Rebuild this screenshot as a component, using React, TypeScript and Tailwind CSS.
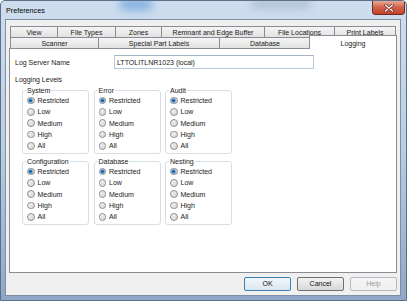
import React from 'react'

// Tab strip rows (back row first), widths measured from the dialog
const TAB_ROW_1 = [
    { label: 'View', w: 'w-[47px]' },
    { label: 'File Types', w: 'w-[58px]' },
    { label: 'Zones', w: 'w-[46px]' },
    { label: 'Remnant and Edge Buffer', w: 'w-[103px]' },
    { label: 'File Locations', w: 'w-[70px]' },
    { label: 'Print Labels', w: 'w-[62px] border-r' },
]

const TAB_ROW_2 = [
    { label: 'Scanner', w: 'w-[88px]' },
    { label: 'Special Part Labels', w: 'w-[121px]' },
    { label: 'Database', w: 'w-[91px]' },
]

const LEVELS = ['Restricted', 'Low', 'Medium', 'High', 'All']

const GROUPS = ['System', 'Error', 'Audit', 'Configuration', 'Database', 'Nesting']

function Radio({ label, checked }: { label: string; checked?: boolean }) {
    return (
        <div className="flex items-center h-[11.3px]">
            <span className="w-[7.5px] h-[7.5px] rounded-full border border-[#8d8d8d] bg-gradient-to-br from-[#f4f4f4] to-[#d6d6d6] flex items-center justify-center">
                {checked && <span className="w-[3px] h-[3px] rounded-full bg-[#1f5f9e] shadow-[0_0_1px_1px_#6fa6d6]" />}
            </span>
            <span className="ml-[3px] leading-none">{label}</span>
        </div>
    )
}

function LevelGroup({ title }: { title: string }) {
    return (
        <fieldset className="border border-[#d5dfe5] rounded-[3px] pl-[4px] pb-[1.5px]">
            <legend className="-ml-[1px] px-[1px] leading-[9px]">{title}</legend>
            {LEVELS.map((lvl, i) => (
                <Radio key={lvl} label={lvl} checked={i === 0} />
            ))}
        </fieldset>
    )
}

function Button({ children, variant }: { children: React.ReactNode; variant?: 'default' | 'disabled' }) {
    const tone =
        variant === 'default'
            ? 'border-[#3c7fb1] from-[#f2f8fc] to-[#d9e6ef] text-[#111]'
            : variant === 'disabled'
                ? 'border-[#b5b9bc] from-[#f5f5f5] to-[#f0f0f0] text-[#9a9a9a]'
                : 'border-[#707070] from-[#f3f3f3] to-[#d8d8d8] text-[#111]'
    return (
        <div className={`w-[47px] h-[14px] rounded-[2px] border bg-gradient-to-b flex items-center justify-center ${tone}`}>
            {children}
        </div>
    )
}

export default function App() {
    return (
        <div className="relative w-[407px] h-[301px] overflow-hidden rounded-t-[5px] border border-[#5e7089] bg-gradient-to-b from-[#cfdeef] via-[#b9cde3] to-[#8fa7c6] flex flex-col font-['Liberation_Sans',sans-serif] text-[7px] text-[#1a1a1a]">
            {/* blurred glass spots in the title bar */}
            <div className="absolute left-[118px] top-[-4px] w-[34px] h-[14px] rounded-full bg-[#5b9bd8] opacity-60 blur-[4px]" />
            <div className="absolute left-[250px] top-[-2px] w-[60px] h-[9px] rounded-full bg-[#7f93a8] opacity-40 blur-[4px]" />

            {/* title bar */}
            <div className="relative h-[18px] flex items-start justify-between">
                <span className="pl-[5px] pt-[5px] text-[7.2px] leading-[9px] text-black">Preferences</span>
                <div className="mr-[1px] -mt-[1px] w-[33px] h-[15px] rounded-b-[3px] border border-[#6d2a22] bg-gradient-to-b from-[#e9a898] via-[#d2614b] to-[#c2412c] flex items-center justify-center">
                    <svg width="10" height="8" viewBox="0 0 10 8">
                        <path d="M1.5 1 L8.5 7 M8.5 1 L1.5 7" stroke="#5a1f18" strokeWidth="2.6" strokeLinecap="round" />
                        <path d="M1.5 1 L8.5 7 M8.5 1 L1.5 7" stroke="#ffffff" strokeWidth="1.4" strokeLinecap="round" />
                    </svg>
                </div>
            </div>

            {/* client area */}
            <div className="flex-1 ml-[4px] mr-[5px] mb-[4px] border border-[#7d8ea5] bg-[#f0f0f0] flex flex-col pt-[6px] px-[3px]">
                {/* tab strip */}
                <div className="pl-[1px]">
                    <div className="flex h-[11px]">
                        {TAB_ROW_1.map(t => (
                            <div key={t.label} className={`${t.w} border-l border-t border-[#898c95] bg-gradient-to-b from-[#f5f5f5] to-[#e2e2e2] flex items-center justify-center leading-none`}>
                                {t.label}
                            </div>
                        ))}
                    </div>
                    <div className="flex h-[11px] items-end">
                        {TAB_ROW_2.map(t => (
                            <div key={t.label} className={`${t.w} h-[11px] border-l border-t border-[#898c95] bg-gradient-to-b from-[#f5f5f5] to-[#e2e2e2] flex items-center justify-center leading-none`}>
                                {t.label}
                            </div>
                        ))}
                        <div className="relative z-10 -ml-[1px] -mb-[1px] w-[88px] h-[14px] border-l border-t border-r border-[#898c95] bg-white text-center leading-[11px] pt-[1.5px]">
                            Logging
                        </div>
                    </div>
                </div>

                {/* tab page */}
                <div className="h-[225px] border border-[#898c95] bg-white pt-[6px] pl-[5px]">
                    <div className="flex items-center">
                        <span className="w-[99px] leading-none">Log Server Name</span>
                        <div className="w-[200px] h-[14px] border border-[#b9c9da] border-t-[#a7b6c6] flex items-center pl-[2px] leading-none">
                            LTTOLITLNR1023 (local)
                        </div>
                    </div>
                    <div className="mt-[5px] leading-[11px]">Logging Levels</div>
                    <div className="mt-[1px] pl-[7px] grid grid-cols-[67px_67px_67px] gap-x-[4.5px] gap-y-[3px]">
                        {GROUPS.map(g => (
                            <LevelGroup key={g} title={g} />
                        ))}
                    </div>
                </div>

                {/* dialog buttons */}
                <div className="mt-[4px] flex justify-end gap-[6px]">
                    <Button variant="default">OK</Button>
                    <Button>Cancel</Button>
                    <Button variant="disabled">Help</Button>
                </div>
            </div>
        </div>
    )
}
